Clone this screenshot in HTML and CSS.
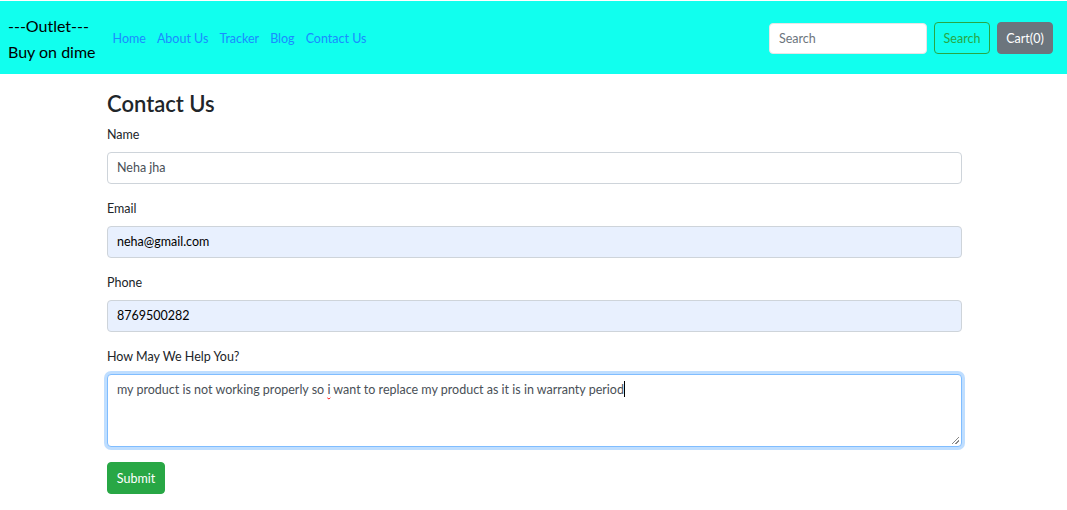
FILE: index.html
```html
<!DOCTYPE html>
<html lang="en">
<head>
<meta charset="utf-8">
<title>Contact Us</title>
<link rel="stylesheet" href="styles.css">
</head>
<body>
<nav class="navbar">
  <div class="brand">
    <div>---Outlet---</div>
    <div>Buy on dime</div>
  </div>
  <ul class="nav-links">
    <li><a href="#">Home</a></li>
    <li><a href="#">About Us</a></li>
    <li><a href="#">Tracker</a></li>
    <li><a href="#">Blog</a></li>
    <li><a href="#">Contact Us</a></li>
  </ul>
  <form class="search">
    <input class="search-input" type="text" placeholder="Search">
    <button class="btn btn-outline" type="button">Search</button>
    <button class="btn btn-cart" type="button">Cart(0)</button>
  </form>
</nav>
<main class="container">
  <h2 class="title">Contact Us</h2>
  <form class="contact">
    <div class="group">
      <label>Name</label>
      <div class="field">Neha jha</div>
    </div>
    <div class="group">
      <label>Email</label>
      <div class="field autofill">neha@gmail.com</div>
    </div>
    <div class="group">
      <label>Phone</label>
      <div class="field autofill">8769500282</div>
    </div>
    <div class="group">
      <label>How May We Help You?</label>
      <div class="field area">my product is not working properly so <span class="typo">i</span> want to replace my product as it is in warranty period<span class="caret"></span><span class="grip"></span></div>
    </div>
    <button class="btn btn-submit" type="button">Submit</button>
  </form>
</main>
</body>
</html>
```
FILE: styles.css
```css
* { box-sizing: border-box; }
html, body { margin: 0; padding: 0; }
body {
  font-family: "Lato", "Noto Sans", sans-serif;
  font-size: 12.5px;
  color: #212529;
  background: #fff;
  padding-top: 1px;
}
.navbar {
  background: #11ffee;
  height: 73px;
  display: flex;
  align-items: center;
  padding: 0 14px 0 8px;
}
.brand {
  font-size: 16px;
  line-height: 26px;
  color: #000;
  margin-top: 3px;
}
.nav-links {
  list-style: none;
  display: flex;
  margin: 0 0 0 17px;
  padding: 2px 0 0;
  gap: 11px;
}
.nav-links a {
  color: #1a8cff;
  text-decoration: none;
  font-size: 12.5px;
}
.search {
  margin-left: auto;
  display: flex;
  align-items: center;
  gap: 7px;
  padding-top: 1px;
}
.search-input {
  width: 158px;
  height: 31px;
  border: 1px solid #e6e6e6;
  border-radius: 4px;
  padding: 0 9px;
  font: inherit;
  font-size: 12.5px;
  background: #fff;
}
.search-input::placeholder { color: #6c757d; }
.btn {
  font: inherit;
  font-size: 12.5px;
  height: 32px;
  border-radius: 4px;
  padding: 0 9px;
  cursor: pointer;
}
.btn-outline {
  background: transparent;
  border: 1px solid #28a745;
  color: #28a745;
  width: 56px;
  padding: 0;
}
.btn-cart {
  background: #6c757d;
  border: 1px solid #6c757d;
  color: #fff;
  width: 56px;
  padding: 0;
}
.container {
  width: 855px;
  margin-left: 107px;
}
.title {
  font-size: 22px;
  font-weight: 600;
  margin: 16px 0 8px;
  line-height: 28px;
}
.group { margin-bottom: 16px; }
.group label {
  display: block;
  line-height: 18px;
  margin-bottom: 8px;
  color: #212529;
}
.field {
  height: 32px;
  border: 1px solid #ced4da;
  border-radius: 4px;
  padding: 0 9px;
  line-height: 30px;
  color: #495057;
  background: #fff;
}
.autofill {
  background: #e8f0fe;
  color: #000;
}
.area {
  position: relative;
  height: 73px;
  line-height: 18px;
  padding-top: 6px;
  border-color: #80bdff;
  box-shadow: 0 0 0 3px rgba(0,123,255,.25);
}
.typo {
  text-decoration: underline wavy red;
  text-decoration-thickness: 1px;
}
.caret {
  display: inline-block;
  width: 1px;
  height: 16px;
  background: #000;
  vertical-align: -3px;
}
.grip {
  position: absolute;
  right: 2px;
  bottom: 2px;
  width: 7px;
  height: 7px;
  background: linear-gradient(135deg, transparent 45%, #888 45%, #888 55%, transparent 55%, transparent 70%, #888 70%, #888 80%, transparent 80%);
}
.btn-submit {
  background: #28a745;
  border: 1px solid #28a745;
  color: #fff;
  width: 58px;
  padding: 0;
  margin-top: -1px;
}
```
